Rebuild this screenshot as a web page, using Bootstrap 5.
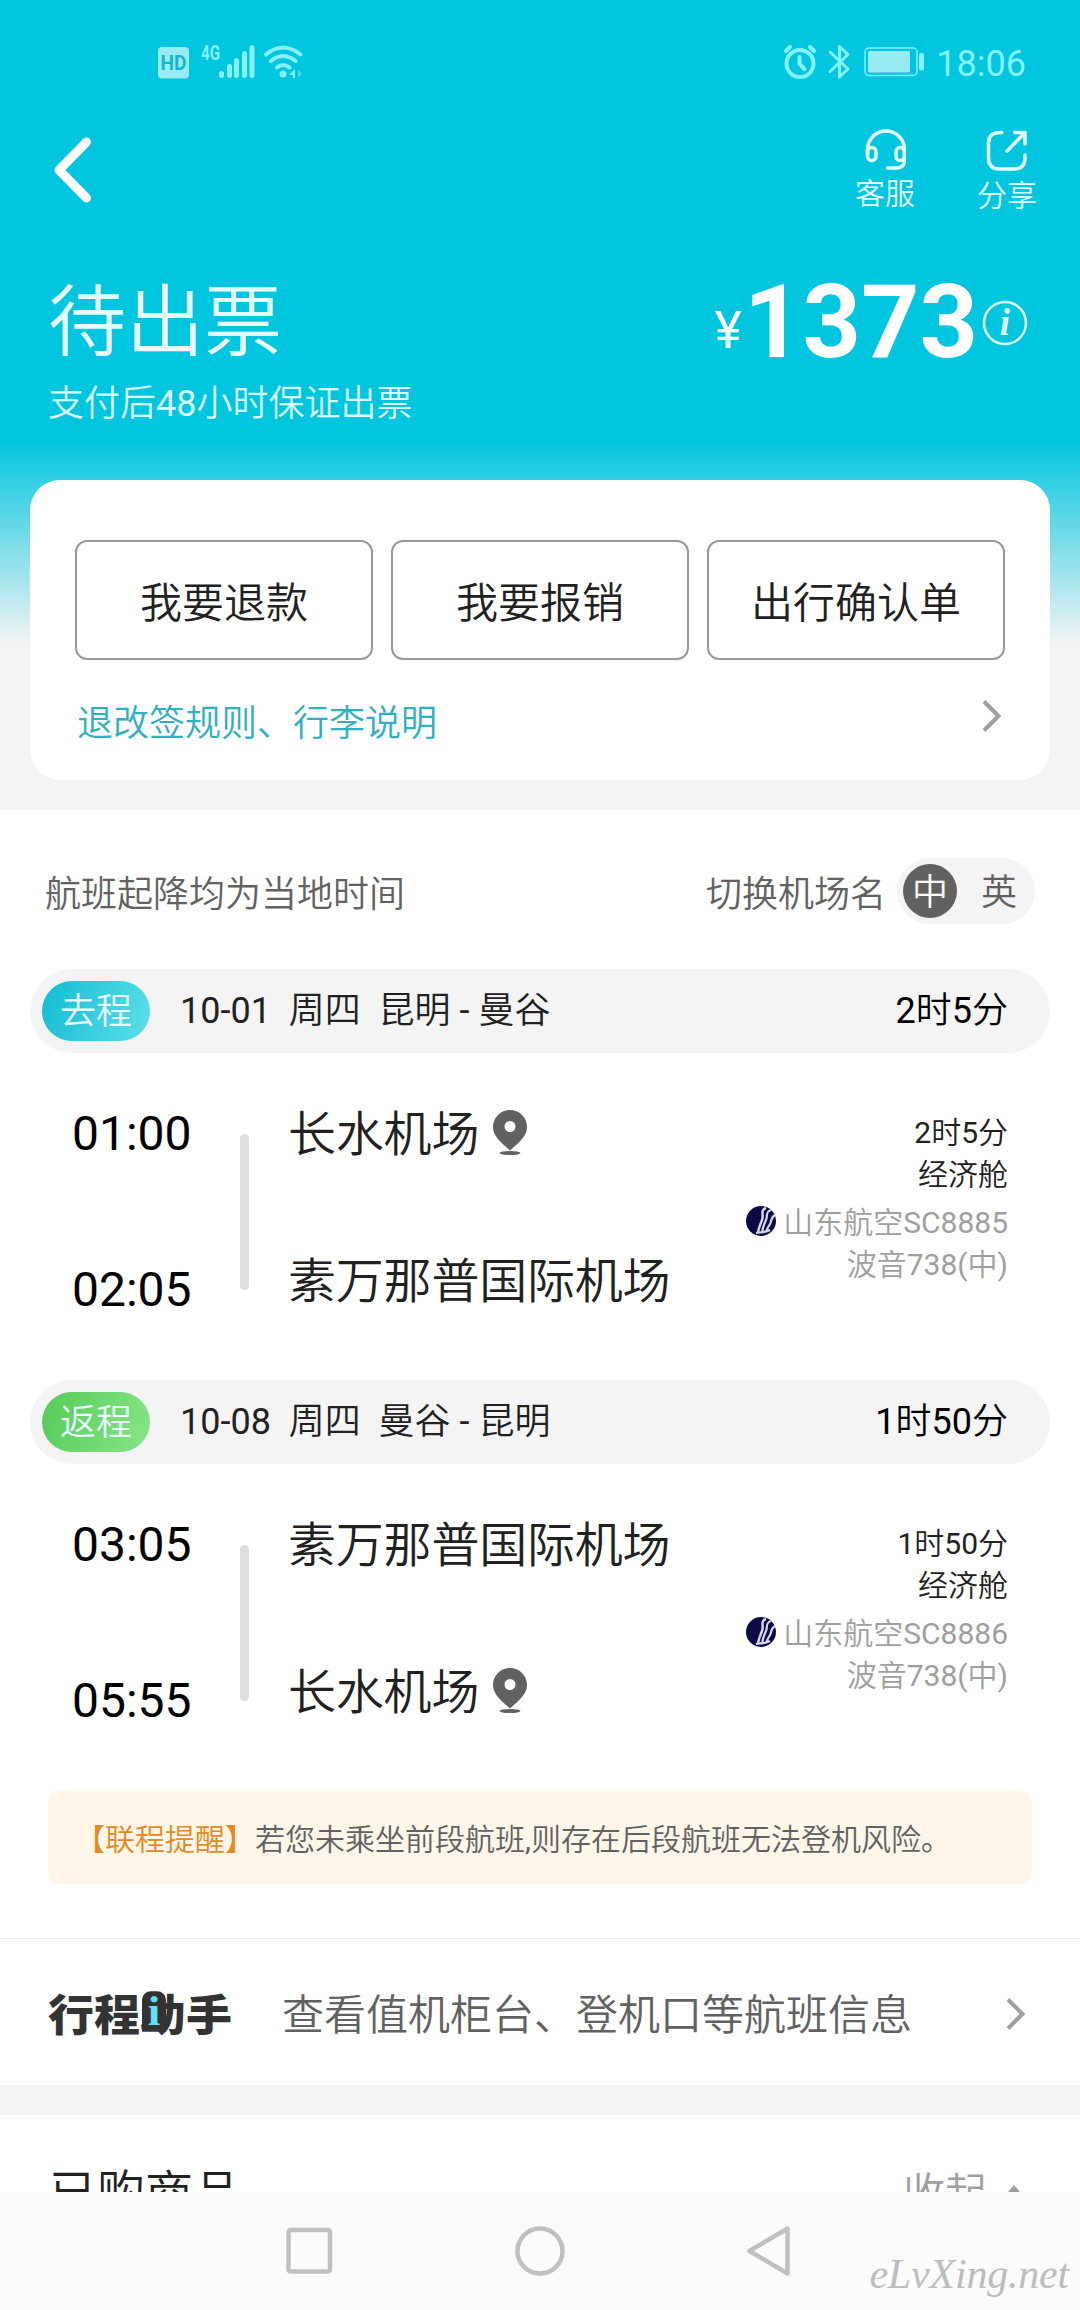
<!DOCTYPE html>
<html lang="zh-CN">
<head>
<meta charset="utf-8">
<meta name="viewport" content="width=device-width, initial-scale=1">
<title>待出票</title>
<link rel="stylesheet" href="https://cdn.jsdelivr.net/npm/bootstrap@5.3.0/dist/css/bootstrap.min.css">
<style>
  body { width: 1080px; height: 2310px; overflow: hidden; background: #f4f4f4; color: #212121;
    font-family: Roboto, "Noto Sans CJK SC DemiLight", "Noto Sans CJK SC Light", "Noto Sans CJK SC", sans-serif; font-size: 36px; line-height: 42px; }
  svg { display: block; flex: none; }
  .screen { height: 2192px; overflow: hidden; background: linear-gradient(#00c5de 440px, #f4f4f4 645px); }
  .statusbar { height: 88px; padding: 43px 54px 0 157px; color: #84f1fb; }
  .statusbar .clock { line-height: 42px; margin-left: 12px; color: #84f1fb; }
  .topbar { height: 156px; padding: 0 41px 0 53px; color: #e2ffff; }
  .topbar .tool { width: 64px; font-size: 30px; line-height: 36px; }
  .headline { height: 132px; padding: 0 52px 0 48px; color: #e8ffff; }
  .headline h1 { font-size: 78px; line-height: 90px; font-weight: 400; margin: 0; }
  .yen { font-size: 52px; line-height: 60px; color: #fff; }
  .amount { font-size: 102px; line-height: 104px; font-weight: 700; color: #fff; }
  .subline { height: 104px; padding-left: 48px; color: #d8fdff; }
  .panel { margin: 0 30px 30px; height: 300px; border-radius: 30px; padding: 60px 45px 0; background: #fff; }
  .act { height: 120px; border: 2px solid #999; border-radius: 12px; font-size: 42px; color: #212121; background: #fff; padding: 6px 0 0; flex: 1 1 0; }
  .rules { color: #2fb0c0; padding: 43px 3px 0 2px; }
  .trips { background: #fff; height: 1129px; border-bottom: 1px solid #ececec; }
  .note-row { height: 159px; padding: 48px 45px 0; color: #616161; }
  .lang { width: 138px; height: 66px; padding: 6px; background: #f4f4f4; border-radius: 33px; }
  .lang span { width: 54px; height: 54px; line-height: 58px; text-align: center; border-radius: 50%; }
  .lang .on { background: #616161; color: #fff; }
  .legbar { height: 84px; margin: 0 30px; padding: 0 42px 0 12px; border-radius: 42px; background: #f4f4f4; }
  .pill { width: 108px; height: 60px; line-height: 62px; border-radius: 30px; text-align: center; color: #eaffff; margin-right: 30px; }
  .pill.go { background: linear-gradient(110deg, #12bad2, #5fe0ea); }
  .pill.back { background: linear-gradient(110deg, #55cb58, #88e588); }
  .legbody { height: 327px; padding: 0 72px 0 72px; }
  .times { width: 168px; padding-top: 51px; gap: 96px; font-size: 48px; line-height: 60px; color: #000; }
  .rail { width: 9px; height: 156px; margin-top: 81px; border-radius: 5px; background: #dedede; }
  .ports { margin-left: 39px; padding-top: 52px; gap: 87px; font-size: 48px; line-height: 60px; letter-spacing: -.2px; }
  .meta { margin-left: auto; padding-top: 59px; font-size: 30px; line-height: 42px; text-align: right; }
  .faint { color: #9e9e9e; }
  .tip { height: 93px; margin: 0 48px; padding-left: 27px; border-radius: 12px; background: #fff6ea; font-size: 30px; line-height: 97px; color: #616161; white-space: nowrap; }
  .tip b { font-weight: 400; color: #e58a22; }
  .helper { height: 146px; background: #fff; padding: 0 54px 0 48px; }
  .wordmark { font-family: "Noto Sans CJK SC"; font-weight: 900; font-size: 46px; line-height: 60px; width: 234px; color: #333; position: relative; transform: scaleY(.94); }
  .wordmark i { position: absolute; left: 94px; top: 8px; width: 24px; height: 43px; border-radius: 9px 9px 0 0; background: #333; color: #5fe3f3; font: 700 45px/42px "Liberation Serif", serif; text-align: center; }
  .goods { margin-top: 30px; height: 77px; background: #fff; padding: 49px 54px 0 49px; font-size: 48px; line-height: 60px; }
  .fold { font-size: 42px; color: #9e9e9e; gap: 15px; }
  .keys { height: 118px; background: #fbfbfb; position: relative; padding-left: 285px; padding-top: 2px; }
  .stamp { position: absolute; right: 11px; bottom: 14px; font: italic 400 42px/44px "Liberation Serif", serif; letter-spacing: -.2px; color: #bdbdbd; }
</style>
</head>
<body>
<svg width="0" height="0" class="position-absolute">
  <defs>
    <g id="pin">
      <path fill="#616161" fill-rule="evenodd" d="M17 0a17 17 0 0 1 17 17c0 8-6 14-17 23.500C6 31 0 25 0 17A17 17 0 0 1 17 0zm0 11a5.500 5.500 0 1 0 0 11 5.500 5.500 0 0 0 0-11z"/>
      <ellipse cx="17" cy="43" rx="10.500" ry="2" fill="#616161"/>
    </g>
    <g id="airline">
      <circle cx="15" cy="15" r="15" fill="#0b0a45"/>
      <path d="M20 2c-6 2-2 7-4 12s-3 7-4 12" fill="none" stroke="#d6d6e8" stroke-width="2.500"/>
      <path d="M25 4c-6 2-3 6-5 10s-3 7-4 12M29 9c-5 3-3 6-5 9s-3 5-4 8M10 27c5-1 9 0 14-3" fill="none" stroke="#d6d6e8" stroke-width="2.200"/>
    </g>
  </defs>
</svg>

<main class="screen">
  <div class="statusbar d-flex justify-content-between align-items-start">
    <svg width="148" height="38" viewBox="0 0 148 38" fill="#84f1fb">
      <rect x="1" y="4" width="31" height="31.500" rx="4" fill="#98ebf2"/>
      <text x="16.500" y="26.500" text-anchor="middle" font-family="Roboto" font-weight="700" font-size="20" textLength="26" lengthAdjust="spacingAndGlyphs" fill="#12b5cc">HD</text>
      <text x="44" y="17" font-family="Roboto" font-weight="700" font-size="20" textLength="19" lengthAdjust="spacingAndGlyphs">4G</text>
      <rect x="62" y="28" width="5" height="7" rx="2.500"/><rect x="70" y="21" width="5" height="14" rx="2.500"/><rect x="77" y="15" width="5" height="20" rx="2.500"/><rect x="85" y="8" width="5" height="27" rx="2.500"/><rect x="92.500" y="2" width="5" height="33" rx="2.500"/>
      <g fill="none" stroke="#84f1fb" stroke-width="4" stroke-linecap="round"><path d="M109 11.500q17-14 34.500 0M114 18q12-10 24.500 0M120 24.500q6-5 12.500 0"/></g>
      <circle cx="126" cy="31" r="3.500"/><path d="M138 26v9h-2v-3h-4z"/><path opacity=".5" d="M141 27l4 3.500-4 4z"/>
    </svg>
    <div class="d-flex align-items-start">
      <svg width="143" height="38" viewBox="3 0 143 38" fill="none" stroke="#84f1fb">
        <g transform="translate(3)"><g stroke-width="4" stroke-linecap="round"><circle cx="19" cy="20.500" r="13.500"/><path d="M18.500 14v7l5 5"/><path d="M5 8l4-4M33 8l-4-4"/></g>
        <path stroke-width="3" stroke-linejoin="round" stroke-linecap="round" d="M49 9l18 17-8.500 8V3.500L67 11.500 49 28.500"/></g>
        <rect x="87" y="5" width="52" height="27.500" rx="4" stroke-width="1.500"/>
        <rect x="90" y="8" width="42" height="21.500" rx="2" fill="#98ebf2" stroke="none"/>
        <rect x="141" y="10" width="5" height="17.500" rx="2" fill="#84f1fb" stroke="none"/>
      </svg>
      <span class="clock">18:06</span>
    </div>
  </div>

  <div class="topbar d-flex justify-content-between">
    <svg width="42" height="70" viewBox="0 0 42 70" style="margin-top:47px"><path d="M33.500 7L6 35l27.500 28" fill="none" stroke="#fff" stroke-width="9" stroke-linecap="round" stroke-linejoin="round"/></svg>
    <div class="d-flex" style="gap:58px">
      <div class="tool d-flex flex-column align-items-center" style="padding-top:41px">
        <svg width="42" height="42" viewBox="-1 0 42 42" fill="none" stroke="#e2ffff" stroke-width="3.500" stroke-linecap="round"><path d="M2.500 26V20.500a18.500 18.500 0 0 1 37 0V31q0 8-8 8h-9"/><rect x="2.500" y="18.500" width="8.500" height="13" rx="4"/><rect x="31" y="18.500" width="8.500" height="13" rx="4"/></svg>
        <span style="margin-top:5px">客服</span>
      </div>
      <div class="tool d-flex flex-column align-items-center" style="padding-top:42px">
        <svg width="42" height="42" viewBox="0 0 42 42" fill="none" stroke="#e2ffff" stroke-width="3.500" stroke-linecap="round" stroke-linejoin="round"><path d="M16 2.500h-2Q2.500 2.500 2.500 13v15q0 11 11 11h14.500q11 0 11-11v-3M28.500 2.500H39v11.500M39 2.500L21 21"/></svg>
        <span style="margin-top:6px">分享</span>
      </div>
    </div>
  </div>

  <div class="headline d-flex justify-content-between">
    <h1 style="padding-top:35px">待出票</h1>
    <div class="d-flex align-items-start">
      <span class="yen" style="margin-top:57px">¥</span>
      <span class="amount" style="margin:26px -1px 0 2px">1373</span>
      <svg width="46" height="46" viewBox="0 0 46 46" style="margin:56px 0 0 5px"><circle cx="23" cy="23" r="21" fill="none" stroke="#e2ffff" stroke-width="2.500"/><text x="23" y="35" text-anchor="middle" font-family="Liberation Serif" font-style="italic" font-weight="700" font-size="37" fill="#e2ffff">i</text></svg>
    </div>
  </div>
  <div class="subline" style="padding-top:7px">支付后48小时保证出票</div>

  <section class="panel">
    <div class="d-flex" style="gap:18px">
      <button class="btn act">我要退款</button><button class="btn act">我要报销</button><button class="btn act">出行确认单</button>
    </div>
    <div class="rules d-flex justify-content-between">
      <span>退改签规则、行李说明</span>
      <svg width="20" height="34" viewBox="0 0 20 34" style="margin-top:-4px"><path d="M2 2.500L16.500 17 2 31.500" fill="none" stroke="#9e9e9e" stroke-width="4"/></svg>
    </div>
  </section>

  <section class="trips">
    <div class="note-row d-flex justify-content-between align-items-start">
      <span style="padding-top:16px">航班起降均为当地时间</span>
      <div class="d-flex">
        <span style="padding:16px 11px 0 0">切换机场名</span>
        <div class="lang d-flex justify-content-between"><span class="on">中</span><span style="margin-right:3px">英</span></div>
      </div>
    </div>

    <div class="legbar d-flex align-items-center">
      <span class="pill go">去程</span><span>10-01&nbsp; 周四&nbsp; 昆明 - 曼谷</span><span class="ms-auto text-black">2时5分</span>
    </div>
    <div class="legbody d-flex">
      <div class="times d-flex flex-column"><span>01:00</span><span>02:05</span></div>
      <div class="rail"></div>
      <div class="ports d-flex flex-column">
        <span class="d-flex">长水机场<svg width="34" height="46" style="margin:5px 0 0 14px"><use href="#pin"/></svg></span>
        <span>素万那普国际机场</span>
      </div>
      <div class="meta">
        <div>2时5分</div><div>经济舱</div>
        <div class="faint d-flex justify-content-end" style="padding-top:6px"><svg width="30" height="30" style="margin:4px 7px 0 0"><use href="#airline"/></svg>山东航空SC8885</div>
        <div class="faint">波音738(中)</div>
      </div>
    </div>

    <div class="legbar d-flex align-items-center">
      <span class="pill back">返程</span><span>10-08&nbsp; 周四&nbsp; 曼谷 - 昆明</span><span class="ms-auto text-black">1时50分</span>
    </div>
    <div class="legbody d-flex">
      <div class="times d-flex flex-column"><span>03:05</span><span>05:55</span></div>
      <div class="rail"></div>
      <div class="ports d-flex flex-column">
        <span>素万那普国际机场</span>
        <span class="d-flex">长水机场<svg width="34" height="46" style="margin:5px 0 0 14px"><use href="#pin"/></svg></span>
      </div>
      <div class="meta">
        <div>1时50分</div><div>经济舱</div>
        <div class="faint d-flex justify-content-end" style="padding-top:6px"><svg width="30" height="30" style="margin:4px 7px 0 0"><use href="#airline"/></svg>山东航空SC8886</div>
        <div class="faint">波音738(中)</div>
      </div>
    </div>
    <div class="tip"><b>【联程提醒】</b>若您未乘坐前段航班,则存在后段航班无法登机风险。</div>
  </section>

  <section class="helper d-flex align-items-center">
    <div class="wordmark">行程助手<i>i</i></div>
    <span style="font-size:42px;padding-top:7px;color:#616161">查看值机柜台、登机口等航班信息</span>
    <svg class="ms-auto" width="20" height="34" viewBox="0 0 20 34" style="margin-top:4px"><path d="M2 2.500L16.500 17 2 31.500" fill="none" stroke="#9e9e9e" stroke-width="4"/></svg>
  </section>

  <section class="goods d-flex justify-content-between">
    <span>已购商品</span>
    <span class="fold d-flex"><span>收起</span><svg width="24" height="14" viewBox="0 0 24 14" style="margin-top:21px"><path d="M12 0l12 14H0z" fill="#9e9e9e"/></svg></span>
  </section>
</main>

<nav class="keys d-flex align-items-center">
  <svg width="510" height="52" viewBox="0 0 510 52" fill="none" stroke="#c0c0c0" stroke-width="4.500" stroke-linejoin="round">
    <rect x="3.500" y="4" width="41.500" height="41.500" rx="2"/>
    <circle cx="255" cy="25" r="22.500"/>
    <path d="M464.500 25L502.500 2.500v45z"/>
  </svg>
  <span class="stamp">eLvXing.net</span>
</nav>
<script src="https://cdn.jsdelivr.net/npm/bootstrap@5.3.0/dist/js/bootstrap.bundle.min.js"></script>
</body>
</html>
